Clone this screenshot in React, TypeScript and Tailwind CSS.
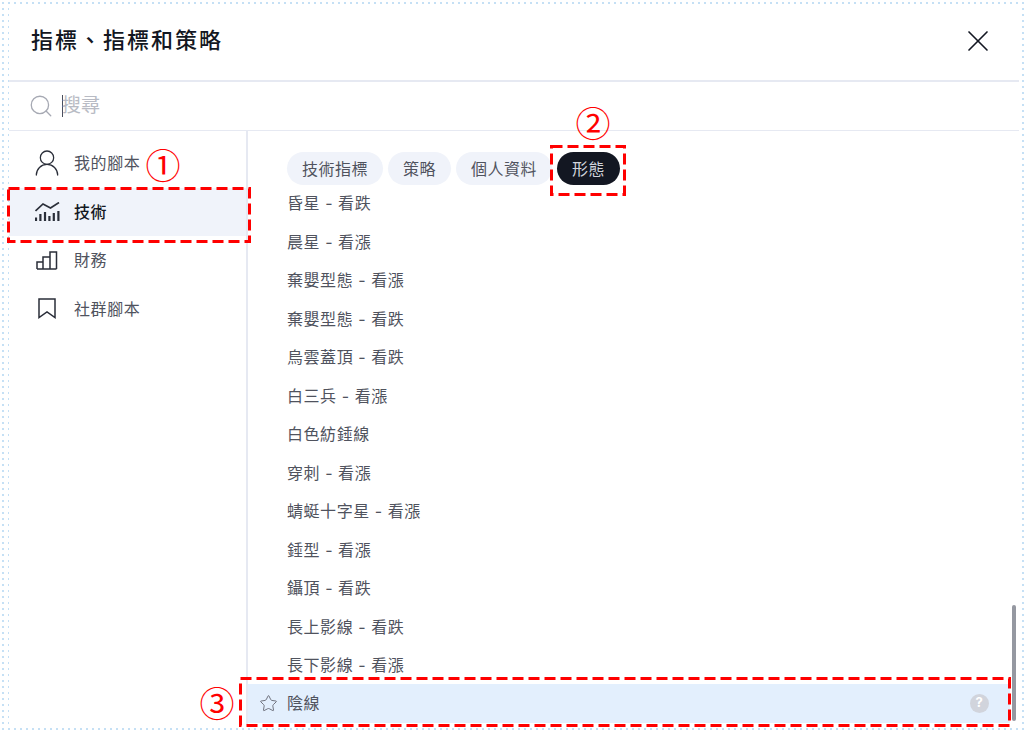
import { Search, Star, UserRound, X } from 'lucide-react';

const FONT = "font-['Inter','Noto_Sans_CJK_TC',sans-serif]";

const tabs = ['技術指標', '策略', '個人資料'];

const patterns = [
  '昏星 - 看跌',
  '晨星 - 看漲',
  '棄嬰型態 - 看漲',
  '棄嬰型態 - 看跌',
  '烏雲蓋頂 - 看跌',
  '白三兵 - 看漲',
  '白色紡錘線',
  '穿刺 - 看漲',
  '蜻蜓十字星 - 看漲',
  '錘型 - 看漲',
  '鑷頂 - 看跌',
  '長上影線 - 看跌',
  '長下影線 - 看漲',
];

const TechIcon = () => (
  <svg width="25" height="19" viewBox="0 0 25 19" fill="none" stroke="currentColor" strokeWidth="1.7">
    <path d="M0.500 9 L8 2 L15.500 6 L24 0.500" />
    <path
      strokeWidth="2.200"
      d="M1 19v-3.500M5.400 19v-7M10 19v-9M14.400 19v-5M18.800 19v-8M23.400 19v-10"
    />
  </svg>
);

const ChartIcon = () => (
  <svg width="22" height="19" viewBox="0 0 22 19" fill="none" stroke="currentColor" strokeWidth="1.500">
    <path d="M1 18V11h6v7M7 18V6h7v12M14 18V1h6.500v17M1 18h19.500" />
  </svg>
);

const BookmarkIcon = () => (
  <svg width="18" height="21" viewBox="0 0 18 21" fill="none" stroke="currentColor" strokeWidth="1.500">
    <path d="M1 1h16v18.500l-8-5.500-8 5.500z" />
  </svg>
);

const Annotation = ({ className, w, h }: { className: string; w: number; h: number }) => (
  <svg width={w} height={h} className={`absolute ${className}`} fill="none">
    <rect x="1.500" y="1.500" width={w - 3} height={h - 3} stroke="#ff0000" strokeWidth="3" strokeDasharray="11 5" />
  </svg>
);

const Number = ({ className, children }: { className: string; children: string }) => (
  <div
    className={`absolute flex h-[36px] w-[36px] items-center justify-center font-['Noto_Sans_CJK_TC',sans-serif] text-[35px] leading-none text-[#f00] ${className}`}
  >
    {children}
  </div>
);

const SideItem = ({ icon, label, active }: { icon: React.ReactNode; label: string; active?: boolean }) => (
  <div
    className={`flex h-[48.500px] items-center gap-[7px] pl-[18px] ${
      active ? 'bg-[#f0f3fa] font-medium text-[#131722]' : 'text-[#50535e]'
    }`}
  >
    <span className="flex w-[40px] justify-center text-[#2a2e39]">{icon}</span>
    <span>{label}</span>
  </div>
);

export default function App() {
  return (
    <div
      className={`relative h-[730px] w-[1024px] overflow-hidden bg-white bg-[radial-gradient(#c5e0f5_1px,transparent_1px)] bg-[length:6px_6px] p-[5px_5px_5px_9px] ${FONT}`}
    >
      <div className="flex h-full w-[1010px] flex-col overflow-hidden bg-white text-[#131722]">
        <div className="flex h-[77px] shrink-0 items-center justify-between border-b-2 border-[#e6e9f2] pb-[4px] pl-[22px] pr-[23px]">
          <h1 className="text-[22px] font-medium tracking-[2px]">指標、指標和策略</h1>
          <X size={36} strokeWidth={1.1} />
        </div>
        <div className="flex h-[49px] shrink-0 items-center gap-[8px] border-b border-[#e6e9f2] pl-[19px]">
          <Search size={26} strokeWidth={1.2} className="text-[#a6a9b3]" />
          <span className="h-[22px] w-px bg-[#4a4f5c]" />
          <span className="-ml-[9px] text-[19px] text-[#b8bbc4]">搜尋</span>
        </div>
        <div className="flex min-h-0 flex-1">
          <div className="flex w-[239px] shrink-0 flex-col border-r-2 border-[#e6e9f2] pt-[8px] text-[16px] tracking-[0.6px]">
            <SideItem icon={<UserRound size={32} strokeWidth={0.95} />} label="我的腳本" />
            <SideItem icon={<TechIcon />} label="技術" active />
            <SideItem icon={<ChartIcon />} label="財務" />
            <SideItem icon={<BookmarkIcon />} label="社群腳本" />
          </div>
          <div className="relative flex min-w-0 flex-1 flex-col pt-[21px]">
            <div className="flex gap-[5px] pl-[39px] text-[16px] tracking-[0.5px] text-[#50535e]">
              {tabs.map((tab) => (
                <div
                  key={tab}
                  className="flex h-[33px] items-center justify-center rounded-full bg-[#f0f3fa] px-[15px]"
                >
                  {tab}
                </div>
              ))}
              <div className="flex h-[33px] items-center rounded-full bg-[#131722] px-[15px] text-[#d1d4dc]">
                形態
              </div>
            </div>
            <div className="-mt-[1px] flex flex-col pl-[39px] text-[16px] tracking-[0.55px] text-[#50535e]">
              {patterns.map((name) => (
                <div key={name} className="flex h-[38.500px] items-center">
                  {name}
                </div>
              ))}
            </div>
            <div className="-mt-[1px] flex h-[39px] w-[762px] items-center bg-[#e3effd] pl-[11px] pr-[21px] text-[16px] tracking-[0.55px] text-[#50535e]">
              <Star size={19} strokeWidth={1.2} className="mr-[9px] text-[#6a6d78]" />
              <span>陰線</span>
              <span className="ml-auto flex h-[19px] w-[19px] items-center justify-center rounded-full bg-[#d1d4dc] text-[13px] font-bold text-white">
                ?
              </span>
            </div>
            <div className="absolute right-[3px] top-[474px] h-[116px] w-[4px] rounded-full bg-[#9598a1]" />
          </div>
        </div>
      </div>

      <Annotation className="left-[7px] top-[187px]" w={244} h={56} />
      <Annotation className="left-[550px] top-[145px]" w={76} h={51} />
      <Annotation className="left-[239px] top-[677px]" w={772} h={50} />
      <Number className="left-[145px] top-[145px]">①</Number>
      <Number className="left-[575px] top-[103px]">②</Number>
      <Number className="left-[199px] top-[683px]">③</Number>
    </div>
  );
}
